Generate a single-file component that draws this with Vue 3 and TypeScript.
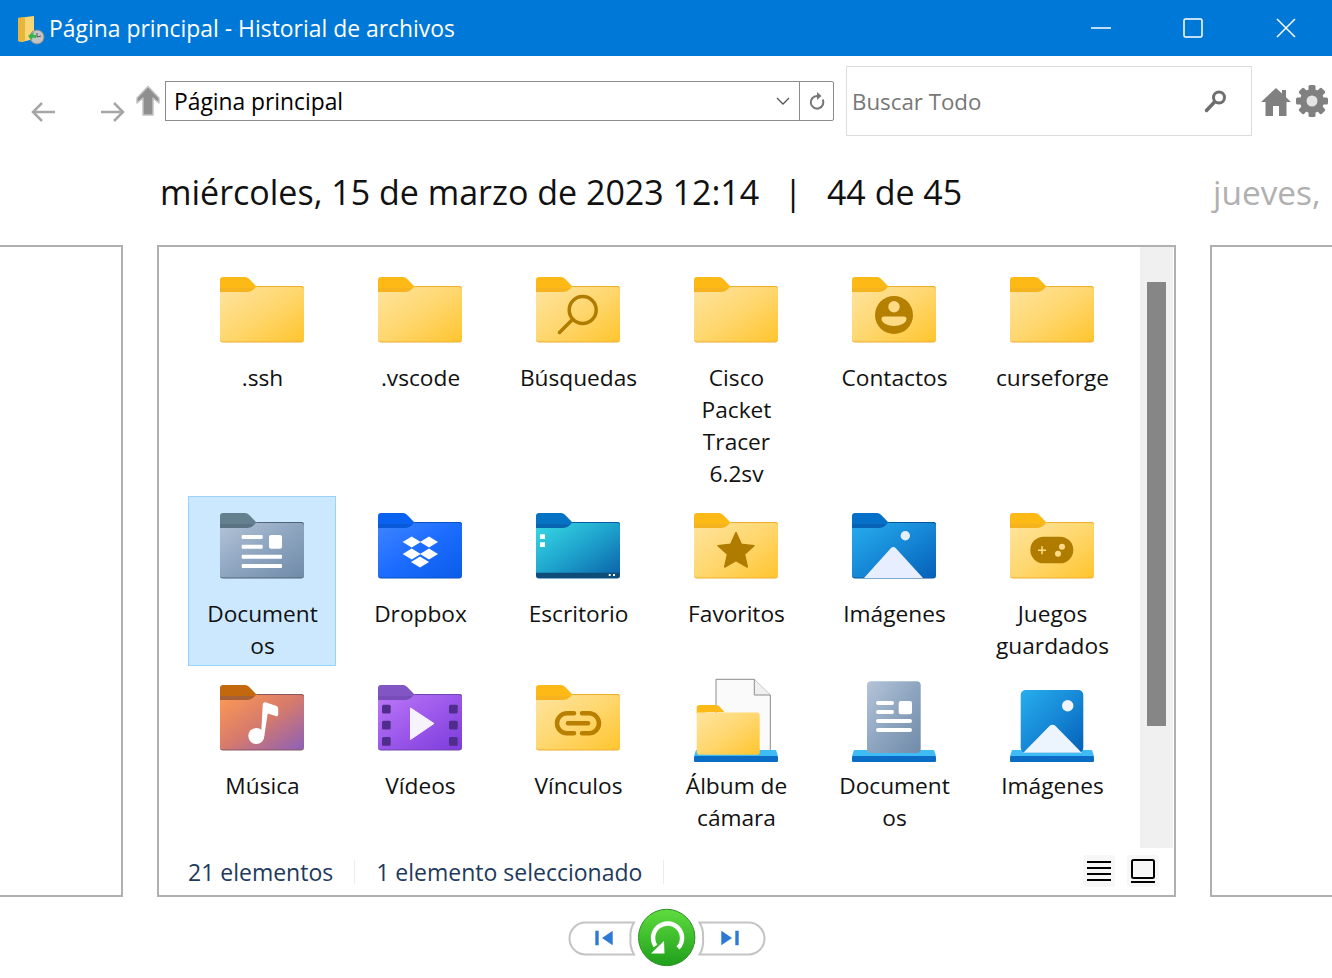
<template>
  <div class="window">
    <!-- shared gradients -->
    <svg class="defs" width="0" height="0">
      <defs>
        <linearGradient v-for="g in gradients" :id="g.id" :key="g.id" x1="0" y1="0" x2="1" y2="1">
          <stop v-for="(c, i) in g.stops" :key="i" :offset="i / (g.stops.length - 1)" :stop-color="c" />
        </linearGradient>
        <linearGradient id="g-green" x1="0" y1="0" x2="0" y2="1">
          <stop offset="0" stop-color="#5fdc3e" />
          <stop offset="1" stop-color="#1f9f1c" />
        </linearGradient>
      </defs>
    </svg>

    <header class="titlebar">
      <svg class="title-icon" width="28" height="30" viewBox="0 0 28 30">
        <path d="M1 3 L17 1 V24 L5 27 L1 26 Z" fill="#f8d675" />
        <path d="M1 3 L8 2 V25 L5 27 L1 26 Z" fill="#e8b53c" />
        <circle cx="20" cy="22" r="7" fill="#c4c4c4" stroke="#8b8b8b" />
        <path d="M20 18 V22 L24 21" fill="none" stroke="#555" stroke-width="1" />
        <path d="M17 17 L11 21 L15 25 L15.500 22.500 L19 23 L19 20 L16 20 Z" fill="#33b44a" />
      </svg>
      <span class="title-text">Página principal - Historial de archivos</span>
      <div class="win-btns">
        <svg width="22" height="22" viewBox="0 0 22 22"><path d="M2 11 H22" stroke="#fff" stroke-width="1.500" /></svg>
        <svg width="22" height="22" viewBox="0 0 22 22"><rect x="2" y="2" width="18" height="18" rx="1.500" fill="none" stroke="#fff" stroke-width="1.500" /></svg>
        <svg width="22" height="22" viewBox="0 0 22 22"><path d="M2 2 L20 20 M20 2 L2 20" stroke="#fff" stroke-width="1.500" /></svg>
      </div>
    </header>

    <div class="toolbar">
      <svg class="nav nav-back" width="26" height="24" viewBox="0 0 26 24">
        <path d="M25 12 H3 M12 3 L3 12 L12 21" fill="none" stroke="#a6a6a6" stroke-width="2.500" />
      </svg>
      <svg class="nav nav-fwd" width="26" height="24" viewBox="0 0 26 24">
        <path d="M1 12 H23 M14 3 L23 12 L14 21" fill="none" stroke="#a6a6a6" stroke-width="2.500" />
      </svg>
      <svg class="nav-up" width="24" height="32" viewBox="0 0 24 32">
        <path d="M12 1.500 L23 13 V18 L17 13 V30 H7 V13 L1 18 V13 Z" fill="#8f8f8f" stroke="#c2c2c2" stroke-width="1.500" stroke-linejoin="round" />
      </svg>
      <div class="address">
        <span class="address-text">Página principal</span>
        <svg width="14" height="10" viewBox="0 0 14 10"><path d="M1 2 L7 8 L13 2" fill="none" stroke="#555" stroke-width="1.300" /></svg>
      </div>
      <button class="refresh">
        <svg width="18" height="20" viewBox="0 0 18 20">
          <path d="M9 5 A6.300 6.300 0 1 0 14.700 8.500" fill="none" stroke="#777" stroke-width="2" />
          <path d="M9 1 V9 L13.500 5 Z" fill="#777" />
        </svg>
      </button>
      <div class="search">
        <span class="search-text">Buscar Todo</span>
        <svg width="24" height="24" viewBox="0 0 24 24">
          <circle cx="15" cy="8.500" r="5.500" fill="none" stroke="#6e6e6e" stroke-width="3" />
          <path d="M10.500 13 L2.500 21.500" stroke="#6e6e6e" stroke-width="3.500" stroke-linecap="round" />
        </svg>
      </div>
      <svg class="home" width="30" height="30" viewBox="0 0 30 30">
        <path d="M15 1 L21 6.500 V3 H25 V10.200 L30 15 H25.500 V29 H18 V19 H12 V29 H4.500 V15 H0 Z" fill="#808080" />
      </svg>
      <svg class="gear" width="34" height="34" viewBox="0 0 34 34">
        <rect v-for="a in gearTeeth" :key="a" x="13.500" y="1" width="7" height="32" rx="1.500" fill="#808080" :transform="`rotate(${a} 17 17)`" />
        <circle cx="17" cy="17" r="12" fill="#808080" />
        <circle cx="17" cy="17" r="5.500" fill="#e4e4e4" />
      </svg>
    </div>

    <div class="dateline">
      <div class="date-current">
        <span>miércoles, 15 de marzo de 2023 12:14</span>
        <span class="date-sep">|</span>
        <span>44 de 45</span>
      </div>
      <span class="date-next">jueves,</span>
    </div>

    <div class="pages">
      <div class="page page-prev"></div>
      <section class="page page-main">
        <div class="content">
          <div class="grid">
            <div v-for="item in items" :key="item.label + item.kind" class="item" :class="{ selected: item.selected }">
              <svg class="icon" width="96" height="96" viewBox="0 0 96 96">
                <template v-if="folders[item.kind]">
                  <path d="M6 19 a3 3 0 0 1 3-3 h22 a6 6 0 0 1 4 1.700 l7 7.300 H87 a3 3 0 0 1 3 3 V50 H6 Z" :fill="folders[item.kind].tab" />
                  <path d="M6 27 V31 H33 c3 0 5-1 7-3 l1-1 Z" :fill="folders[item.kind].back" opacity="0.5" />
                  <path d="M6 31 H33 c3 0 5-1 7-3 l3-3 H87 a3 3 0 0 1 3 3 V78 a3 3 0 0 1-3 3 H9 a3 3 0 0 1-3-3 Z" :fill="`url(#g-${folders[item.kind].grad})`" />
                  <path d="M9 81.500 H87 a3 3 0 0 0 3-3 v-1 a3 3 0 0 1-3 3 H9 a3 3 0 0 1-3-3 v1 a3 3 0 0 0 3 3 Z" :fill="folders[item.kind].back" />
                  <path d="M43 25 H87 a3 3 0 0 1 3 3 v1 a3 3 0 0 0-3-3 H42 Z" :fill="folders[item.kind].back" />
                </template>

                <g v-if="item.kind === 'search'" fill="none" stroke="#b07c00">
                  <circle cx="52.700" cy="49" r="13.500" stroke-width="3.500" />
                  <path d="M42 59 L29.500 71.500" stroke-width="3.500" stroke-linecap="round" />
                </g>
                <g v-else-if="item.kind === 'contact'">
                  <circle cx="48" cy="54" r="19" fill="#b57f00" />
                  <circle cx="48" cy="45.700" r="5.700" fill="#ffdb85" />
                  <path d="M38 55.500 H58 a2.500 2.500 0 0 1 2.500 2.500 C60.500 62 54 65 48 65 S35.500 62 35.500 58 a2.500 2.500 0 0 1 2.500-2.500 Z" fill="#ffdb85" />
                </g>
                <g v-else-if="item.kind === 'docs'" fill="#fff">
                  <rect x="27.700" y="38" width="21" height="4" rx="1" />
                  <rect x="27.700" y="47.700" width="21" height="4" rx="1" />
                  <rect x="27.700" y="57.700" width="40.300" height="4" rx="1" />
                  <rect x="27.700" y="67" width="40.300" height="4" rx="1" />
                  <rect x="55" y="38" width="13" height="13.700" rx="2" />
                </g>
                <g v-else-if="item.kind === 'dropbox'" fill="#fff">
                  <path d="M39.700 39.500 l9 5.500 -9 5.500 -9-5.500 Z" />
                  <path d="M57 39.500 l9 5.500 -9 5.500 -9-5.500 Z" />
                  <path d="M39.700 51.500 l9 5.500 -9 5.500 -9-5.500 Z" />
                  <path d="M57 51.500 l9 5.500 -9 5.500 -9-5.500 Z" />
                  <path d="M48 59.500 l9 5.500 -9 5.500 -9-5.500 Z" />
                </g>
                <g v-else-if="item.kind === 'desktop'">
                  <path d="M6 75.700 H90 V78 a3 3 0 0 1-3 3 H9 a3 3 0 0 1-3-3 Z" fill="#0e4d78" />
                  <rect x="10" y="37.300" width="5" height="4.700" fill="#fff" />
                  <rect x="10" y="45.300" width="5" height="4.700" fill="#fff" />
                  <rect x="78.700" y="77" width="2" height="2" fill="#fff" />
                  <rect x="83" y="77" width="2" height="2" fill="#fff" />
                </g>
                <path v-else-if="item.kind === 'star'" d="M48 35.500 L53.300 47.300 L66 48.700 L56.500 57.200 L59.300 70 L48 63.500 L36.700 70 L39.500 57.200 L30 48.700 L42.700 47.300 Z" fill="#b07c00" stroke="#b07c00" stroke-width="1.500" stroke-linejoin="round" />
                <g v-else-if="item.kind === 'pictures'">
                  <circle cx="59.300" cy="38.700" r="4.700" fill="#e8eef6" />
                  <path d="M18 81 L45 51 a3 3 0 0 1 4.600 0 L77 81 Z" fill="#e6eeff" />
                </g>
                <g v-else-if="item.kind === 'games'">
                  <rect x="26.300" y="39.700" width="43" height="26.600" rx="13.300" fill="#b07c00" />
                  <path d="M34 53.300 H42 M38 49.300 V57.300" stroke="#ffdb85" stroke-width="1.500" />
                  <circle cx="58" cy="49.700" r="3" fill="#ffdb85" />
                  <circle cx="54" cy="56.700" r="3" fill="#ffdb85" />
                </g>
                <g v-else-if="item.kind === 'music'" fill="#fff">
                  <circle cx="42.300" cy="67" r="8" />
                  <path d="M47 67 L48.700 36 c0-2 1.500-3 3.500-2.500 l9 3 c2 .6 3 1.500 3 3.500 v5 c0 2-1 2.500-2.500 2 l-8-2.500 L50.300 67 Z" />
                </g>
                <g v-else-if="item.kind === 'video'">
                  <g fill="#4f2d8c">
                    <rect v-for="r in filmHoles" :key="r[0] + '-' + r[1]" :x="r[0]" :y="r[1]" width="8.700" height="8.700" rx="1.500" />
                  </g>
                  <path d="M38.500 39 L62 54.500 L38.500 70.500 Z" fill="#f7f3fd" stroke="#f7f3fd" stroke-linejoin="round" />
                </g>
                <g v-else-if="item.kind === 'link'" fill="none" stroke="#b87f00" stroke-width="4.500" stroke-linecap="round">
                  <path d="M44 44.300 H37 a10 10 0 0 0 0 20 H44" />
                  <path d="M52 44.300 H59 a10 10 0 0 1 0 20 H52" />
                  <path d="M38 54.300 H58" />
                </g>
                <g v-else-if="item.kind === 'libalbum'">
                  <path d="M28 83.700 V10.300 H66.300 L82.300 26 V83.700 Z" fill="#fafafa" stroke="#8c8c8c" stroke-width="1" />
                  <path d="M66.300 10.300 V26 H82.300" fill="#f0f0f0" stroke="#8c8c8c" stroke-width="1" />
                  <path d="M8 81 H88 L90 87 H6 Z" fill="#3fbcf5" />
                  <rect x="6" y="87" width="84" height="6" rx="1" fill="#0a6cc4" />
                  <path d="M8.700 39 a3 3 0 0 1 3-3 h16 a6 6 0 0 1 4 1.700 l5 5.600 H20 L8.700 45 Z" fill="#fdb915" />
                  <path d="M8.700 43.500 H69 a2.500 2.500 0 0 1 2.700 2.500 V83 a2.500 2.500 0 0 1-2.700 2.700 H11.500 a2.500 2.500 0 0 1-2.800-2.700 Z" fill="url(#g-yellow)" />
                </g>
                <g v-else-if="item.kind === 'libdocs'">
                  <path d="M8 81 H88 L90 87 H6 Z" fill="#3fbcf5" />
                  <rect x="6" y="87" width="84" height="6" rx="1" fill="#0a6cc4" />
                  <rect x="21" y="12.300" width="53.700" height="71.700" rx="4" fill="url(#g-grey)" />
                  <g fill="#fff">
                    <rect x="30" y="32" width="18" height="4" rx="2" />
                    <rect x="30" y="41" width="18" height="4" rx="2" />
                    <rect x="30" y="50" width="36" height="4" rx="2" />
                    <rect x="30" y="59" width="36" height="4" rx="2" />
                    <rect x="52.700" y="32" width="13.300" height="13.300" rx="2" />
                  </g>
                </g>
                <g v-else-if="item.kind === 'libpics'">
                  <path d="M8 81 H88 L90 87 H6 Z" fill="#3fbcf5" />
                  <rect x="6" y="87" width="84" height="6" rx="1" fill="#0a6cc4" />
                  <rect x="16.700" y="21" width="62.600" height="62.700" rx="5" fill="url(#g-sky)" />
                  <circle cx="63.700" cy="36.700" r="5.700" fill="#f0f4fa" />
                  <path d="M19.300 83.700 L45.500 57 a4 4 0 0 1 6 0 L77.700 83.700 Z" fill="#ecf4fd" />
                </g>
              </svg>
              <div class="label">{{ item.label }}</div>
            </div>
          </div>
          <div class="scrollbar"><div class="thumb"></div></div>
        </div>
        <footer class="status">
          <span class="status-cell first">21 elementos</span>
          <span class="status-cell">1 elemento seleccionado</span>
          <div class="views">
            <span class="view-btn">
              <svg width="24" height="20" viewBox="0 0 24 20"><path d="M0 1 H24 M0 7 H24 M0 13 H24 M0 19 H24" stroke="#000" stroke-width="2" /></svg>
            </span>
            <span class="view-btn">
              <svg width="24" height="24" viewBox="0 0 24 24"><rect x="1" y="1" width="22" height="18" rx="1.500" fill="none" stroke="#000" stroke-width="2" /><path d="M0 23 H24" stroke="#000" stroke-width="2" /></svg>
            </span>
          </div>
        </footer>
      </section>
      <div class="page page-next"></div>
    </div>

    <div class="player">
      <svg width="200" height="62" viewBox="566 908 200 62">
        <path d="M634 922.500 H585.500 a16 16 0 0 0 0 32 H634 a26 26 0 0 1 -3.500 -16 a26 26 0 0 1 3.500 -16 Z" fill="#fff" stroke="#c4c4c4" stroke-width="2" />
        <path d="M699.500 922.500 H748.500 a16 16 0 0 1 0 32 H699.500 a26 26 0 0 0 3.500 -16 a26 26 0 0 0 -3.500 -16 Z" fill="#fff" stroke="#c4c4c4" stroke-width="2" />
        <path d="M595.300 930.700 H598.700 V945.300 H595.300 Z M612.700 930.700 V945.300 L602 938 Z" fill="#2c7ad6" />
        <path d="M735.300 930.700 H738.700 V945.300 H735.300 Z M721.300 930.700 V945.300 L732 938 Z" fill="#2c7ad6" />
        <circle cx="666.700" cy="937.500" r="28.200" fill="url(#g-green)" stroke="#2f8f28" />
        <path d="M678 948 A14.500 14.500 0 1 0 655.500 946" fill="none" stroke="#fff" stroke-width="4.500" />
        <path d="M651 953.500 L664.500 953.500 L664 941 Z" fill="#fff" />
      </svg>
    </div>
  </div>
</template>

<script setup lang="ts">
type Item = { label: string; kind: string; selected?: boolean };

const gradients = [
  { id: "g-yellow", stops: ["#ffe49f", "#ffd76f", "#ffc52e"] },
  { id: "g-grey", stops: ["#b4c4d8", "#8ea5c0", "#6f8ba8"] },
  { id: "g-blue", stops: ["#3f85ff", "#1c6cff", "#0a5ce8"] },
  { id: "g-teal", stops: ["#38dbe6", "#1ea3cc", "#0a5fa8"] },
  { id: "g-sky", stops: ["#28aeee", "#1688d6", "#0460b8"] },
  { id: "g-music", stops: ["#ff9a52", "#d67a6c", "#8c60b8"] },
  { id: "g-purple", stops: ["#bc78f8", "#9c58ea", "#7c3cdc"] },
];

const yellow = { tab: "#fdb915", back: "#eeae2c", grad: "yellow" };
const folders: Record<string, { tab: string; back: string; grad: string }> = {
  plain: yellow,
  search: yellow,
  contact: yellow,
  star: yellow,
  games: yellow,
  link: yellow,
  docs: { tab: "#64808f", back: "#4f6474", grad: "grey" },
  dropbox: { tab: "#0a62f0", back: "#0850c4", grad: "blue" },
  desktop: { tab: "#0672c4", back: "#0a5a9e", grad: "teal" },
  pictures: { tab: "#0670c8", back: "#05569e", grad: "sky" },
  music: { tab: "#c4680e", back: "#8a5560", grad: "music" },
  video: { tab: "#8155c2", back: "#6f45b0", grad: "purple" },
};

const items: Item[] = [
  { label: ".ssh", kind: "plain" },
  { label: ".vscode", kind: "plain" },
  { label: "Búsquedas", kind: "search" },
  { label: "Cisco Packet Tracer 6.2sv", kind: "plain" },
  { label: "Contactos", kind: "contact" },
  { label: "curseforge", kind: "plain" },
  { label: "Documentos", kind: "docs", selected: true },
  { label: "Dropbox", kind: "dropbox" },
  { label: "Escritorio", kind: "desktop" },
  { label: "Favoritos", kind: "star" },
  { label: "Imágenes", kind: "pictures" },
  { label: "Juegos guardados", kind: "games" },
  { label: "Música", kind: "music" },
  { label: "Vídeos", kind: "video" },
  { label: "Vínculos", kind: "link" },
  { label: "Álbum de cámara", kind: "libalbum" },
  { label: "Documentos", kind: "libdocs" },
  { label: "Imágenes", kind: "libpics" },
];

const gearTeeth = [0, 45, 90, 135];
const filmHoles = [
  [10, 35.7],
  [10, 51.7],
  [10, 68],
  [77, 35.7],
  [77, 51.7],
  [77, 68],
];
</script>

<style scoped>
.window {
  width: 1332px;
  height: 978px;
  overflow: hidden;
  background: #fff;
  font-family: "Open Sans", "Noto Sans", sans-serif;
  color: #111;
}

.defs {
  display: block;
}

.titlebar {
  height: 56px;
  background: #0078d7;
  display: flex;
  align-items: center;
  color: #fff;
}

.title-icon {
  margin-left: 17px;
  margin-right: 4px;
  margin-top: 4px;
}

.title-text {
  font-size: 22.9px;
}

.win-btns {
  margin-left: auto;
  display: flex;
  gap: 71px;
  padding-right: 35px;
}

.toolbar {
  height: 80px;
  display: flex;
  align-items: flex-start;
  padding-top: 10px;
  box-sizing: border-box;
}

.nav {
  margin-top: 34px;
}

.nav-back {
  margin-left: 30px;
}

.nav-fwd {
  margin-left: 44px;
}

.nav-up {
  margin-left: 10px;
  margin-top: 19px;
}

.address {
  margin-left: 5px;
  margin-top: 15px;
  width: 635px;
  height: 40px;
  box-sizing: border-box;
  border: 1px solid #8c8c8c;
  display: flex;
  align-items: center;
  justify-content: space-between;
  padding: 0 9px 0 8px;
}

.address-text {
  font-size: 22.8px;
  color: #000;
}

.refresh {
  margin-top: 15px;
  margin-left: -1px;
  width: 35px;
  height: 40px;
  padding: 0;
  box-sizing: border-box;
  border: 1px solid #8c8c8c;
  border-radius: 0 2px 2px 0;
  background: #fff;
  display: flex;
  align-items: center;
  justify-content: center;
}

.search {
  margin-left: 12px;
  width: 406px;
  height: 70px;
  box-sizing: border-box;
  border: 1px solid #dcdcdc;
  display: flex;
  align-items: center;
  justify-content: space-between;
  padding: 2px 23px 2px 5px;
}

.search-text {
  font-size: 22.3px;
  color: #777;
}

.home {
  margin-left: 9px;
  margin-top: 21px;
}

.gear {
  margin-left: 4px;
  margin-top: 18px;
}

.dateline {
  height: 109px;
  box-sizing: border-box;
  padding: 31px 0 0 160px;
  display: flex;
  white-space: nowrap;
  overflow: hidden;
  font-size: 34px;
  line-height: 50px;
}

.date-current {
  width: 1053px;
  flex: none;
  color: #111;
}

.date-sep {
  margin: 0 24.5px;
}

.date-next {
  color: #b0b0b0;
  font-size: 33.4px;
}

.pages {
  display: flex;
  gap: 34px;
  height: 652px;
}

.page {
  box-sizing: border-box;
  border: 2px solid #b0b0b0;
  flex: none;
}

.page-prev {
  width: 123px;
  border-left: none;
}

.page-next {
  width: 122px;
  border-right: none;
}

.page-main {
  width: 1019px;
  display: flex;
  flex-direction: column;
}

.content {
  height: 601px;
  display: flex;
}

.grid {
  flex: 1;
  padding: 13px 0 0 29px;
  display: grid;
  grid-template-columns: repeat(6, 148px);
  column-gap: 10px;
  row-gap: 2px;
  align-content: start;
}

.item {
  box-sizing: border-box;
  border: 1px solid transparent;
  padding-bottom: 3px;
  display: flex;
  flex-direction: column;
  align-items: center;
}

.item.selected {
  background: #cce8ff;
  border-color: #99d1ff;
}

.icon {
  display: block;
  flex: none;
}

.label {
  margin-top: 5px;
  margin-left: 1px;
  width: 120px;
  font-size: 22.7px;
  line-height: 32px;
  text-align: center;
  overflow-wrap: anywhere;
}

.scrollbar {
  width: 33px;
  margin-right: 1px;
  background: #f0f0f0;
  padding: 35px 7px 0 7px;
  box-sizing: border-box;
}

.thumb {
  height: 444px;
  background: #868686;
}

.status {
  flex: 1;
  display: flex;
  align-items: center;
  padding: 1px 0 0 29px;
  font-size: 23px;
  color: #1e3a5c;
}

.status-cell {
  padding-right: 21px;
  margin-right: 21px;
  border-right: 1px solid #ececec;
  line-height: 24px;
}

.views {
  margin-left: auto;
  display: flex;
  gap: 12px;
  margin-right: 15px;
  margin-top: -2px;
}

.view-btn {
  width: 32px;
  height: 32px;
  border-radius: 3px;
  background: #f7f7f7;
  display: flex;
  align-items: center;
  justify-content: center;
}

.player {
  display: flex;
  justify-content: center;
  padding-top: 11px;
}

.player svg {
  display: block;
}
</style>

<style>
html,
body {
  margin: 0;
  background: #fff;
  overflow: hidden;
}
</style>
